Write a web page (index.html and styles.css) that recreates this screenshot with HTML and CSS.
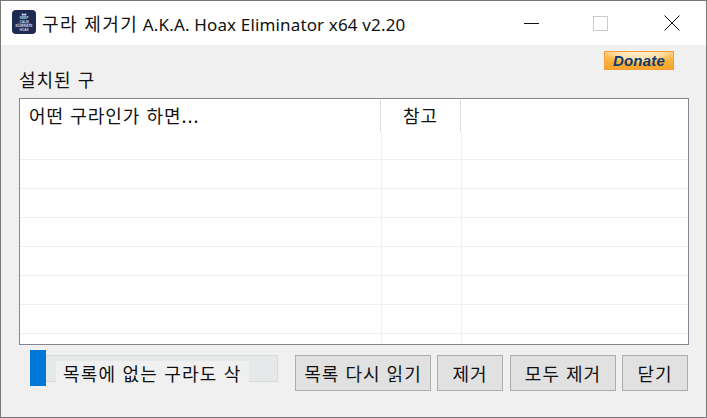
FILE: index.html
```html
<!DOCTYPE html>
<html lang="ko">
<head>
<meta charset="utf-8">
<title>구라 제거기</title>
<link rel="stylesheet" href="styles.css">
</head>
<body>
<div class="window">
  <header class="titlebar">
    <svg class="app-icon" width="24" height="24" viewBox="0 0 24 24">
      <rect width="24" height="24" rx="4" fill="#1d2b53"/>
      <path d="M9.5 5.5 L10 3 L12 4.2 L14 3 L14.5 5.5 Z" fill="#c5cbdc"/>
      <text class="icon-text" x="12" y="9.2">KEEP</text>
      <text class="icon-text" x="12" y="12.6">CALM</text>
      <rect x="5" y="13.6" width="14" height=".6" fill="#7f89a8"/>
      <text class="icon-text" x="12" y="17.4">ELIMINATE</text>
      <text class="icon-text" x="12" y="21">HOAX</text>
    </svg>
    <span class="title"><span class="title-ko">구라 제거기</span> A.K.A. Hoax Eliminator x64 v2.20</span>
    <div class="controls">
      <svg class="ctl" width="15" height="15" viewBox="0 0 15 15"><path d="M0 7.5H15" stroke="#111" stroke-width="1"/></svg>
      <svg class="ctl" width="15" height="15" viewBox="0 0 15 15"><rect x=".5" y=".5" width="14" height="14" fill="none" stroke="#ccc"/></svg>
      <svg class="ctl" width="16" height="16" viewBox="0 0 16 16"><path d="M.5.5 15.5 15.5M15.5.5 .5 15.5" stroke="#111" stroke-width="1"/></svg>
    </div>
  </header>
  <main class="content">
    <div class="donate-row"><a class="donate">Donate</a></div>
    <div class="group-label">설치된 구</div>
    <section class="list">
      <div class="row head">
        <div class="cell c1">어떤 구라인가 하면...</div>
        <div class="cell c2">참고</div>
        <div class="cell c3"></div>
      </div>
      <div class="row"><div class="cell c1"></div><div class="cell c2"></div><div class="cell c3"></div></div>
      <div class="row"><div class="cell c1"></div><div class="cell c2"></div><div class="cell c3"></div></div>
      <div class="row"><div class="cell c1"></div><div class="cell c2"></div><div class="cell c3"></div></div>
      <div class="row"><div class="cell c1"></div><div class="cell c2"></div><div class="cell c3"></div></div>
      <div class="row"><div class="cell c1"></div><div class="cell c2"></div><div class="cell c3"></div></div>
      <div class="row"><div class="cell c1"></div><div class="cell c2"></div><div class="cell c3"></div></div>
      <div class="row"><div class="cell c1"></div><div class="cell c2"></div><div class="cell c3"></div></div>
      <div class="row last"><div class="cell c1"></div><div class="cell c2"></div><div class="cell c3"></div></div>
    </section>
    <footer class="actions">
      <div class="check">
        <span class="track"></span>
        <span class="thumb"></span>
        <span class="check-label">목록에 없는 구라도 삭</span>
      </div>
      <div class="buttons">
        <button class="btn b1">목록 다시 읽기</button>
        <button class="btn b2">제거</button>
        <button class="btn b3">모두 제거</button>
        <button class="btn b4">닫기</button>
      </div>
    </footer>
  </main>
</div>
</body>
</html>
```
FILE: styles.css
```css
* { box-sizing: border-box; }
html, body { margin: 0; padding: 0; }
body {
  width: 707px;
  height: 418px;
  overflow: hidden;
  font-family: "Noto Sans CJK KR", "Noto Sans", sans-serif;
  font-size: 18px;
  letter-spacing: 1px;
  color: #111;
}
.window {
  width: 707px;
  height: 418px;
  border: 1px solid #777;
  display: flex;
  flex-direction: column;
  background: #f0f0f0;
}
.titlebar {
  height: 44px;
  background: #fff;
  display: flex;
  align-items: center;
  padding-left: 11px;
  flex: none;
}
.app-icon { flex: none; margin-bottom: 2px; }
.icon-text {
  font-family: "Liberation Sans", sans-serif;
  font-size: 3.2px;
  font-weight: bold;
  letter-spacing: 0;
  fill: #d5d9e5;
  text-anchor: middle;
}
.title {
  margin-left: 6px;
  font-size: 17px;
  line-height: 26px;
  padding-top: 2px;
  white-space: nowrap;
  font-family: "Noto Sans", "Noto Sans CJK KR", sans-serif;
  letter-spacing: 0.15px;
}
.title-ko {
  font-family: "Noto Sans CJK KR", sans-serif;
  font-size: 18px;
  letter-spacing: 1.4px;
}
.controls {
  margin-left: auto;
  display: flex;
  align-items: center;
  padding-right: 26px;
}
.ctl { display: block; }
.ctl:nth-child(1) { margin-right: 54px; }
.ctl:nth-child(2) { margin-right: 56px; }
.content {
  flex: 1;
  display: flex;
  flex-direction: column;
  padding: 6px 17px 0 18px;
}
.donate-row {
  display: flex;
  justify-content: flex-end;
  height: 19px;
  padding-right: 15px;
}
.donate {
  width: 70px;
  height: 19px;
  border: 1px solid #f59c3c;
  background:
    radial-gradient(ellipse 48% 70% at 50% 0, #fff0cf 0, #fde0a8 70%, transparent 100%),
    linear-gradient(#fdd084 0, #fbb33f 50%, #f9a52a 100%);
  color: #0f3a6d;
  font: italic bold 15px/17px "Liberation Sans", sans-serif;
  letter-spacing: 0.2px;
  text-align: center;
}
.group-label {
  height: 28px;
  line-height: 18px;
}
.list {
  width: 670px;
  height: 247px;
  border: 1px solid #82878f;
  background: #fff;
  overflow: hidden;
  flex: none;
}
.row {
  display: flex;
  height: 29px;
  border-bottom: 1px solid #f0f0f0;
}
.row.head {
  height: 33px;
  border-bottom: 0;
  padding-top: 1px;
}
.row.head + .row { height: 28px; }
.row.last { border-bottom: 0; height: 10px; }
.cell { height: 100%; }
.c1 { width: 362px; border-right: 1px solid #f0f0f0; }
.c2 { width: 80px; border-right: 1px solid #f0f0f0; text-align: center; }
.c3 { flex: 1; }
.head .cell {
  border-right-color: #dcdcdc;
  line-height: 31px;
  white-space: nowrap;
}
.head .c1 { width: 361px; padding-left: 9px; }
.actions {
  display: flex;
  justify-content: space-between;
  height: 46px;
  padding: 10px 1px 0 0;
  flex: none;
}
.check {
  position: relative;
  width: 248px;
  height: 36px;
  margin-left: 11px;
  margin-top: -5px;
}
.track {
  position: absolute;
  left: 0;
  top: 5px;
  width: 248px;
  height: 27px;
  background: #e6e9ea;
  border: 1px solid #d8dbdb;
}
.thumb {
  position: absolute;
  left: 0;
  top: 0;
  width: 16px;
  height: 36px;
  background: #0078d7;
}
.check-label {
  position: absolute;
  left: 26px;
  top: 11px;
  height: 25px;
  width: 193px;
  padding-left: 7px;
  background: #f0f0f0;
  line-height: 24px;
  letter-spacing: 1.2px;
  white-space: nowrap;
  overflow: hidden;
}
.buttons {
  display: flex;
  gap: 6px;
}
.btn {
  height: 36px;
  padding: 0;
  border: 1px solid #adadad;
  background: #e1e1e1;
  color: #111;
  font-family: "Noto Sans CJK KR", sans-serif;
  font-size: 18px;
  letter-spacing: 1px;
  line-height: 32px;
  white-space: nowrap;
}
.b1 { width: 136px; }
.b2 { width: 66px; }
.b3 { width: 106px; margin-left: 1px; }
.b4 { width: 66px; }
```
